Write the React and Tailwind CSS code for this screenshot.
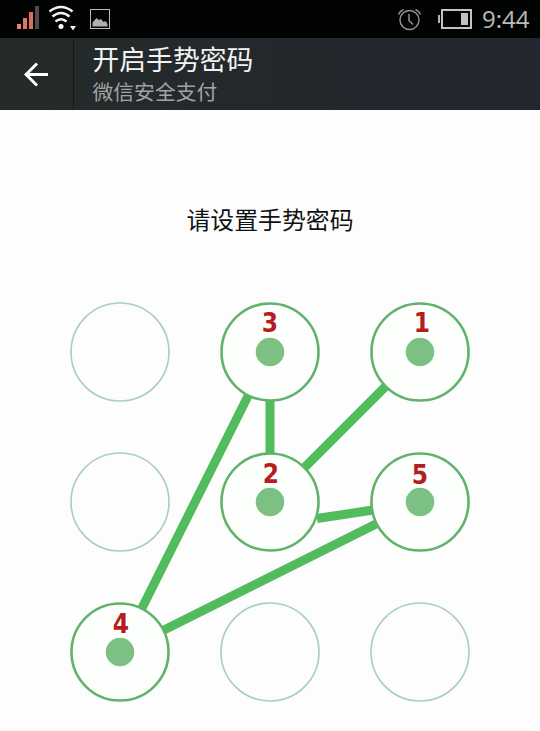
import React from 'react';

const nodes = [
  { id: 'a1' },
  { id: 'a2', n: '3', shift: 'left-0' },
  { id: 'a3', n: '1', shift: 'left-[2px]' },
  { id: 'b1' },
  { id: 'b2', n: '2', shift: 'left-[1px] top-[1px]' },
  { id: 'b3', n: '5', shift: 'top-[2px]' },
  { id: 'c1', n: '4', shift: 'left-[1px] top-[1px]' },
  { id: 'c2' },
  { id: 'c3' },
];

function StatusBar() {
  return (
    <div className="flex h-[38px] shrink-0 items-center justify-between bg-[#020403] pl-4 pr-[9px]">
      <svg width="96" height="38" viewBox="16 0 96 38">
        <rect x="17" y="24" width="4" height="5" fill="#e98272" />
        <rect x="23" y="18" width="4" height="11" fill="#e07565" />
        <rect x="29" y="12" width="4" height="17" fill="#df6d5e" />
        <rect x="35" y="6" width="4" height="23" fill="#514b4d" />
        <g fill="none" stroke="#f1f3f2" strokeWidth="2.5">
          <path d="M49.5 11.5Q61 2.500 72.500 11.500" />
          <path d="M52.500 16.500Q61 9.500 69.500 16.500" />
          <path d="M55.500 21.500Q61 17 66.500 21.500" />
        </g>
        <circle cx="61" cy="26.500" r="2.500" fill="#fff" />
        <path d="M70 26h6l-3 4.500z" fill="#f1f3f2" />
        <rect x="90.500" y="9.500" width="19" height="19" fill="none" stroke="#b9bbba" />
        <path d="M92.500 26.500v-4l4-4.500 2.500 2 2-1 2.500 3 2-1 2 3v2.500z" fill="#aeb0af" />
      </svg>
      <div className="flex items-center">
        <svg width="85" height="38" viewBox="397 0 85 38">
          <g fill="none" stroke="#8f9190" strokeWidth="1.500">
            <circle cx="409.500" cy="20" r="9.500" />
            <path d="M409 14v6.500l4 4M398.500 14.500q1.500-3.500 5-5M415.500 9.500q3.500 1.500 5 5" />
          </g>
          <rect x="442" y="10" width="29" height="18" fill="none" stroke="#c3c5c4" strokeWidth="2" />
          <rect x="438" y="15" width="2" height="8" fill="#b5b7b6" />
          <rect x="461" y="13" width="7" height="12" fill="#bfc1c0" />
        </svg>
        <span className="w-[49px] whitespace-nowrap font-['Open_Sans',sans-serif] text-[24px] leading-[38px] text-[#b9bbba]">9:44</span>
      </div>
    </div>
  );
}

function Header() {
  return (
    <header className="flex h-[72px] shrink-0 bg-linear-to-r from-[#252a29] to-[#23262f]">
      <div className="flex w-[74px] items-center border-r border-[#171c1b] pl-6">
        <svg width="25" height="26" viewBox="24 61 25 26" fill="none" stroke="#fff" strokeWidth="3">
          <path d="M48 74.500H27M37 63.500L26 74.500L37 85.500" />
        </svg>
      </div>
      <div className="flex flex-col pl-[18.500px] pt-[3px]">
        <h1 className="text-[26.8px] leading-9 text-[#f1f4f3]">开启手势密码</h1>
        <p className="text-[20.8px] leading-[29px] text-[#a0a4a5]">微信安全支付</p>
      </div>
    </header>
  );
}

function PatternNode({ n, shift }) {
  return (
    <div className="grid size-[100px]">
      <svg className="col-start-1 row-start-1" width="100" height="100">
        {n ? (
          <>
            <circle cx="50" cy="50" r="48.500" fill="#fdfffd" stroke="#61b36c" strokeWidth="2.600" />
            <circle cx="50" cy="50" r="14.300" fill="#7cc183" />
          </>
        ) : (
          <circle cx="50" cy="50" r="49" fill="none" stroke="#a7cfb9" strokeWidth="1.600" />
        )}
      </svg>
      {n && (
        <span className={`relative col-start-1 row-start-1 mt-2 h-[27px] text-center font-['DejaVu_Sans_Condensed','DejaVu_Sans',sans-serif] text-[26px] font-bold leading-[27px] text-[#b51d22] ${shift}`}>{n}</span>
      )}
    </div>
  );
}

export default function App() {
  return (
    <div className="flex h-[731px] w-[540px] flex-col overflow-hidden bg-[#fdfdfd] font-['Noto_Sans_CJK_SC',sans-serif]">
      <StatusBar />
      <Header />
      <main className="flex flex-1 flex-col items-center">
        <p className="mt-[91px] text-[23.9px] leading-9 text-[#111]">请设置手势密码</p>
        <div className="relative mt-[65px]">
          <svg className="absolute inset-0" width="400" height="400" viewBox="70 302 400 400">
            <path d="M420 352L270 502V352L120 652" fill="none" stroke="#50bc5c" strokeWidth="9" />
            <path d="M120 652L420 502M317 518.500L373 510" fill="none" stroke="#50bc5c" strokeWidth="9" />
          </svg>
          <div className="relative grid grid-cols-3 gap-[50px]">
            {nodes.map((node) => <PatternNode key={node.id} n={node.n} shift={node.shift} />)}
          </div>
        </div>
      </main>
    </div>
  );
}
